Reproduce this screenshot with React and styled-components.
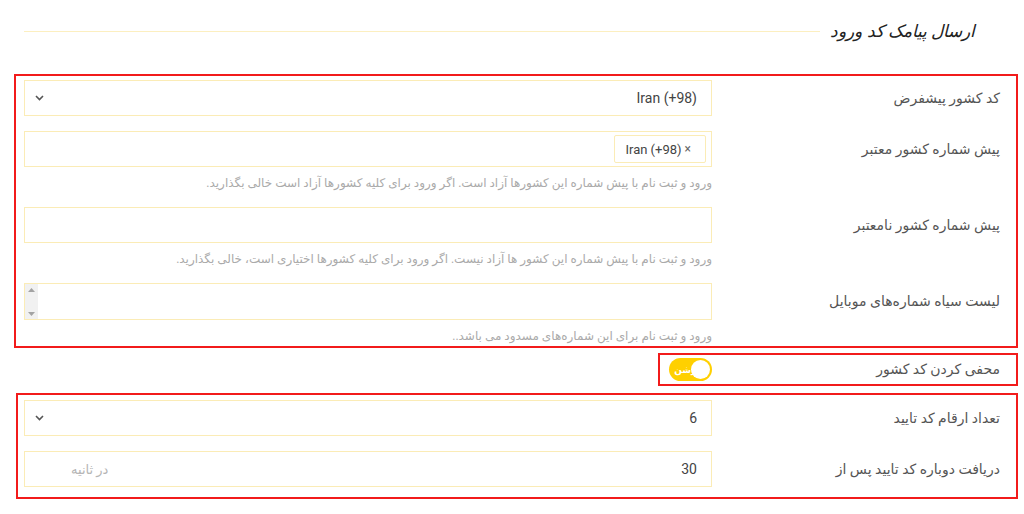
import React from 'react'
import styled, { createGlobalStyle } from 'styled-components'

const Global = createGlobalStyle`
  body { margin: 0; background: #fff; font-family: Roboto, "DejaVu Sans", sans-serif; }
  * { box-sizing: border-box; }
`

const Page = styled.div`direction: rtl; width: 1024px; padding: 14px 6px 0 14px;`
const Header = styled.div`display: flex; align-items: center; height: 34px; padding-right: 43px;`
const Title = styled.h3`margin: 0; font-size: 17px; font-weight: normal; font-style: italic; color: #222; white-space: nowrap;`
const Line = styled.div`flex: 1; height: 1px; background: #fcefc0; margin-right: 10px; margin-left: 10px;`

const Box = styled.div`
  border: 2px solid #f21b1b;
  padding: ${p => p.$pad || '4px 0 0 8px'};
  margin-top: ${p => p.$top || 0}px;
  margin-left: ${p => p.$left || 0}px;
  width: ${p => p.$fit ? 'fit-content' : 'auto'};
`
const Row = styled.div`
  display: flex; align-items: ${p => p.$center ? 'center' : 'flex-start'};
  margin-bottom: ${p => p.$gap ?? 14}px;
`
const Label = styled.label`
  width: 304px; flex: none; height: ${p => p.$h || 36}px; line-height: ${p => p.$h || 36}px;
  padding-right: 16px; font-size: 14px; color: #555;
`
const Control = styled.div`flex: 1; min-width: 0;`
const Help = styled.div`margin-top: 6px; line-height: 20px; font-size: 12px; color: #aaa;`

const FieldBox = styled.div`
  display: flex; align-items: center;
  height: 36px; border: 1px solid #fbecb6; background: #fff;
`
const Value = styled.input`
  flex: 1; min-width: 0; height: 100%; border: none; outline: none; background: transparent;
  padding: 0 14px; font: 14px Roboto, "DejaVu Sans", sans-serif; color: #444; direction: rtl;
`
const Chevron = styled.span`display: flex; padding: 0 12px 0 10px;`
const Suffix = styled.span`padding: 0 14px 0 46px; font-size: 13px; color: #b5b5b5; white-space: nowrap;`

const Tag = styled.span`
  direction: ltr; display: inline-flex; align-items: center; gap: 3px;
  height: 28px; margin-right: 5px; padding: 0 14px 0 10px;
  border: 1px solid #fbecb6; border-radius: 2px; font-size: 13px; color: #444;
`
const Close = styled.span`font-size: 12px; color: #666;`

const AreaBox = styled.div`display: flex; height: 37px; border: 1px solid #fbecb6;`
const Area = styled.textarea`
  flex: 1; min-width: 0; height: 100%; resize: none; border: none;
  outline: none; font: 14px Roboto, "DejaVu Sans", sans-serif; padding: 6px 14px;
`
const Scroll = styled.span`
  width: 13px; flex: none; background: #f1f1f1;
  display: flex; flex-direction: column; justify-content: space-between; align-items: center;
  padding: 4px 0 3px;
`

const Toggle = styled.span`
  position: relative; display: inline-flex; align-items: center;
  width: 43px; height: 23px; border-radius: 12px; background: #ffd000; overflow: hidden;
  margin-left: 9px;
`
const ToggleText = styled.span`font-size: 9px; font-weight: bold; color: #fff; padding-right: 10px; white-space: nowrap;`
const Knob = styled.span`position: absolute; right: 2px; top: 2px; width: 19px; height: 19px; border-radius: 50%; background: #fff;`

const Down = () => (
  <svg width="9" height="6" viewBox="0 0 9 6"><path d="M1 1 L4.5 4.5 L8 1" fill="none" stroke="#555" strokeWidth="1.6" /></svg>
)
const Arrow = ({ up }) => (
  <svg width="7" height="4" viewBox="0 0 7 4"><path d={up ? 'M0 4 L3.5 0 L7 4Z' : 'M0 0 L3.5 4 L7 0Z'} fill="#a3a3a3" /></svg>
)

export default function App() {
  return (
    <Page>
      <Global />
      <Header>
        <Title>ارسال پیامک کد ورود</Title>
        <Line />
      </Header>

      <Box $top={26}>
        <Row $gap={15}>
          <Label>کد کشور پیشفرض</Label>
          <Control>
            <FieldBox>
              <Value defaultValue="Iran (+98)" readOnly />
              <Chevron><Down /></Chevron>
            </FieldBox>
          </Control>
        </Row>
        <Row>
          <Label>پیش شماره کشور معتبر</Label>
          <Control>
            <FieldBox>
              <Tag>Iran (+98)<Close>×</Close></Tag>
            </FieldBox>
            <Help>ورود و ثبت نام با پیش شماره این کشورها آزاد است. اگر ورود برای کلیه کشورها آزاد است خالی بگذارید.</Help>
          </Control>
        </Row>
        <Row>
          <Label>پیش شماره کشور نامعتبر</Label>
          <Control>
            <FieldBox />
            <Help>ورود و ثبت نام با پیش شماره این کشور ها آزاد نیست. اگر ورود برای کلیه کشورها اختیاری است، خالی بگذارید.</Help>
          </Control>
        </Row>
        <Row $gap={0}>
          <Label>لیست سیاه شماره‌های موبایل</Label>
          <Control>
            <AreaBox>
              <Area />
              <Scroll><Arrow up /><Arrow /></Scroll>
            </AreaBox>
            <Help>ورود و ثبت نام برای این شماره‌های مسدود می باشد..</Help>
          </Control>
        </Row>
      </Box>

      <Box $top={5} $fit $pad="3px 0 3px 0">
        <Row $gap={0} $center>
          <Label $h={23}>محفی کردن کد کشور</Label>
          <Toggle>
            <ToggleText>روشن</ToggleText>
            <Knob />
          </Toggle>
        </Row>
      </Box>

      <Box $top={7} $left={2} $pad="5px 0 10px 6px">
        <Row $gap={15}>
          <Label>تعداد ارقام کد تایید</Label>
          <Control>
            <FieldBox>
              <Value defaultValue="6" readOnly />
              <Chevron><Down /></Chevron>
            </FieldBox>
          </Control>
        </Row>
        <Row $gap={0}>
          <Label>دریافت دوباره کد تایید پس از</Label>
          <Control>
            <FieldBox>
              <Value defaultValue="30" readOnly />
              <Suffix>در ثانیه</Suffix>
            </FieldBox>
          </Control>
        </Row>
      </Box>
    </Page>
  )
}
